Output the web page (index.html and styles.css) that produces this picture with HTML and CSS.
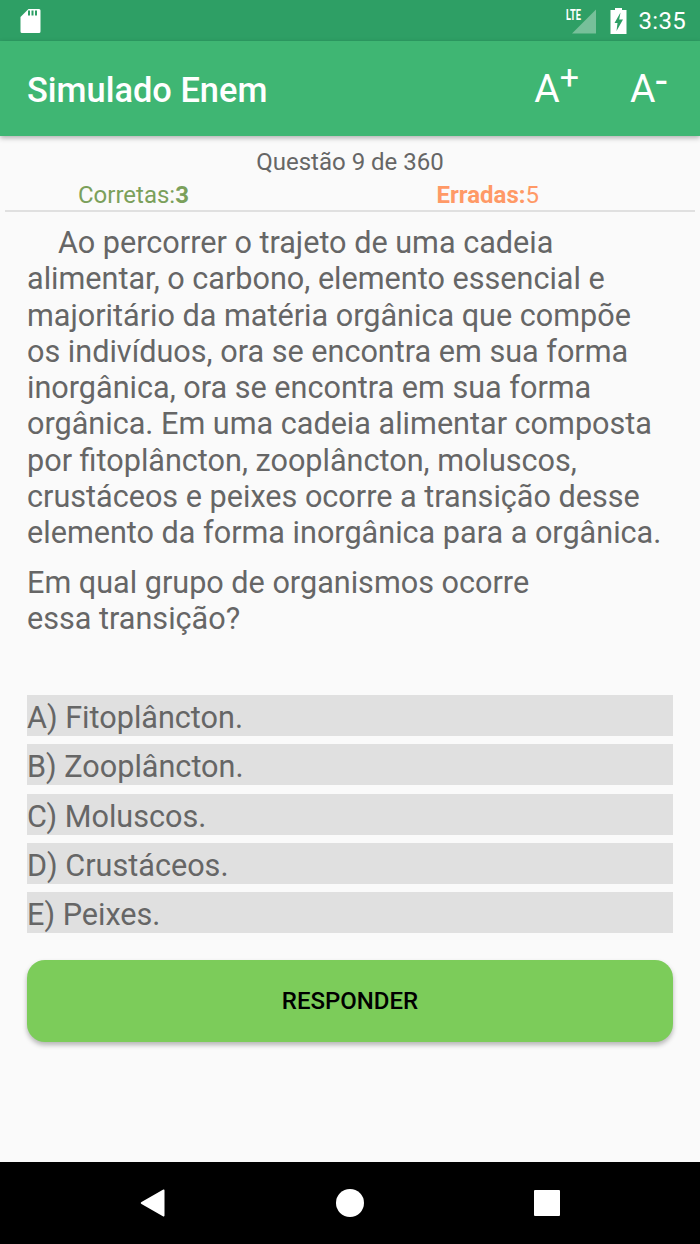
FILE: index.html
```html
<!DOCTYPE html>
<html lang="pt-BR">
<head>
  <meta charset="UTF-8">
  <meta name="viewport" content="width=device-width, initial-scale=1.0">
  <title>Simulado Enem</title>
  <link rel="stylesheet" href="styles.css">
</head>
<body>

  <div class="phone">
    <div class="status-bar">
      <svg class="sd-icon" width="22" height="26" viewBox="0 0 22 26">
        <path fill="#fff" d="M8.500 1h10.500a1.500 1.500 0 0 1 1.500 1.500v21a1.500 1.500 0 0 1-1.500 1.500H2a1.500 1.500 0 0 1-1.500-1.500V9z"/>
        <path fill="#2e9f65" d="M8 2.500h2v5H8zM11.500 2.500h2v5h-2zM15 2.500h2v5h-2z"/>
      </svg>
      <div class="status-right">
        <svg class="signal-icon" width="32" height="26" viewBox="0 0 32 26">
          <path fill="#fff" fill-opacity="0.35" d="M32 1.500v24H8z"/>
          <text x="2" y="11.500" class="lte" textLength="15" lengthAdjust="spacingAndGlyphs">LTE</text>
        </svg>
        <svg class="battery-icon" width="17" height="26" viewBox="0 0 17 26">
          <path fill="#fff" d="M5 0h7v2h4.500v24H.5V2H5z"/>
          <path fill="#2e9f65" d="M10.500 4.500L4.500 15h3l-1 8 6.500-11.500H9.200z"/>
        </svg>
        <span class="clock">3:35</span>
      </div>
    </div>

    <header class="toolbar">
      <h1 class="toolbar-title">Simulado Enem</h1>
      <div class="toolbar-actions">
        <span class="font-button">A<sup class="font-sign">+</sup></span>
        <span class="font-button">A<sup class="font-sign minus">-</sup></span>
      </div>
    </header>

    <main class="content">
      <div class="progress">Questão 9 de 360</div>
      <div class="score">
        <div class="score-right">Corretas:<b>3</b></div>
        <div class="score-wrong"><b>Erradas:</b>5</div>
      </div>

      <div class="question">
        <p class="question-text first">Ao percorrer o trajeto de uma cadeia alimentar, o carbono, elemento essencial e majoritário da matéria orgânica que compõe os indivíduos, ora se encontra em sua forma inorgânica, ora se encontra em sua forma orgânica. Em uma cadeia alimentar composta por fitoplâncton, zooplâncton, moluscos, crustáceos e peixes ocorre a transição desse elemento da forma inorgânica para a orgânica.</p>
        <p class="question-text">Em qual grupo de organismos ocorre<br>essa transição?</p>
      </div>

      <div class="options">
        <div class="option">A) Fitoplâncton.</div>
        <div class="option">B) Zooplâncton.</div>
        <div class="option">C) Moluscos.</div>
        <div class="option">D) Crustáceos.</div>
        <div class="option">E) Peixes.</div>
      </div>

      <button class="answer-button">RESPONDER</button>
    </main>

    <nav class="nav-bar">
      <svg width="26" height="28" viewBox="0 0 26 28"><path fill="#fff" d="M24.500 1.500v25a1 1 0 0 1-1.600.8L1.500 15a1.200 1.200 0 0 1 0-2L22.900.7a1 1 0 0 1 1.600.8z"/></svg>
      <svg width="28" height="28" viewBox="0 0 28 28"><circle cx="14" cy="14" r="14" fill="#fff"/></svg>
      <svg width="26" height="26" viewBox="0 0 26 26"><rect x="0" y="0" width="26" height="26" rx="1" fill="#fff"/></svg>
    </nav>
  </div>

</body>
</html>
```

FILE: styles.css
```css
* {
  box-sizing: border-box;
}

body {
  margin: 0;
  background-color: #fafafa;
  font-family: Roboto, Arial, sans-serif;
}

.phone {
  width: 700px;
  height: 1244px;
  display: flex;
  flex-direction: column;
  overflow: hidden;
}

.status-bar {
  height: 41px;
  flex: none;
  background-color: #2e9f65;
  color: #fff;
  display: flex;
  align-items: center;
  justify-content: space-between;
  padding: 0 14px 0 20px;
}

.status-right {
  display: flex;
  align-items: center;
}

.lte {
  font-family: "Roboto", sans-serif;
  font-size: 14px;
  font-weight: 700;
  fill: #fff;
}

.battery-icon {
  margin-left: 14px;
}

.clock {
  margin-left: 12px;
  font-size: 24px;
  letter-spacing: 0.3px;
}

.toolbar {
  height: 95px;
  flex: none;
  background-color: #3fb673;
  color: #fff;
  display: flex;
  align-items: center;
  justify-content: space-between;
  padding: 2px 33px 0 27px;
  box-shadow: 0 2px 5px rgba(0, 0, 0, 0.3);
  position: relative;
}

.toolbar-title {
  margin: 0;
  font-size: 34.4px;
  font-weight: 500;
}

.toolbar-actions {
  display: flex;
  gap: 51px;
  margin-top: -2px;
}

.font-button {
  font-size: 39px;
  line-height: 46px;
  white-space: nowrap;
}

.font-sign {
  font-size: 34px;
  line-height: 0;
  vertical-align: 13px;
}

.font-sign.minus {
  font-size: 42px;
  vertical-align: 7px;
}

.content {
  flex: 1;
  padding: 12px 27px 0;
  position: relative;
}

.progress {
  text-align: center;
  font-size: 24px;
  line-height: 28px;
  color: #666;
}

.score {
  display: flex;
  justify-content: space-between;
  height: 36px;
  margin: 0 -22px;
  padding: 5px 156px 0 73px;
  border-bottom: 2px solid #e0e0e0;
  font-size: 24px;
  line-height: 28px;
}

.score b {
  font-weight: 700;
}

.score-right {
  color: #7ba05b;
}

.score-wrong {
  color: #ff9966;
}

.question {
  padding: 13px 6px 0 0;
}

.question-text {
  margin: 0 0 13px;
  font-size: 30.6px;
  line-height: 36.3px;
  color: #666;
}

.question-text.first {
  text-indent: 31px;
}

.options {
  display: flex;
  flex-direction: column;
  gap: 8.250px;
  margin-top: 57.8px;
}

.option {
  height: 41px;
  background-color: #e0e0e0;
  font-size: 30.6px;
  line-height: 45px;
  color: #666;
}

.answer-button {
  display: block;
  width: 100%;
  height: 82px;
  margin-top: 27px;
  border: none;
  border-radius: 18px;
  background-color: #7ccc5a;
  color: #000;
  font-family: inherit;
  font-size: 24px;
  font-weight: 500;
  box-shadow: 0 3px 5px rgba(0, 0, 0, 0.28);
}

.nav-bar {
  height: 82px;
  flex: none;
  background-color: #000;
  display: flex;
  align-items: center;
  padding-left: 140px;
}

.nav-bar svg:nth-child(2) {
  margin-left: 170px;
}

.nav-bar svg:nth-child(3) {
  margin-left: 170px;
}
```
